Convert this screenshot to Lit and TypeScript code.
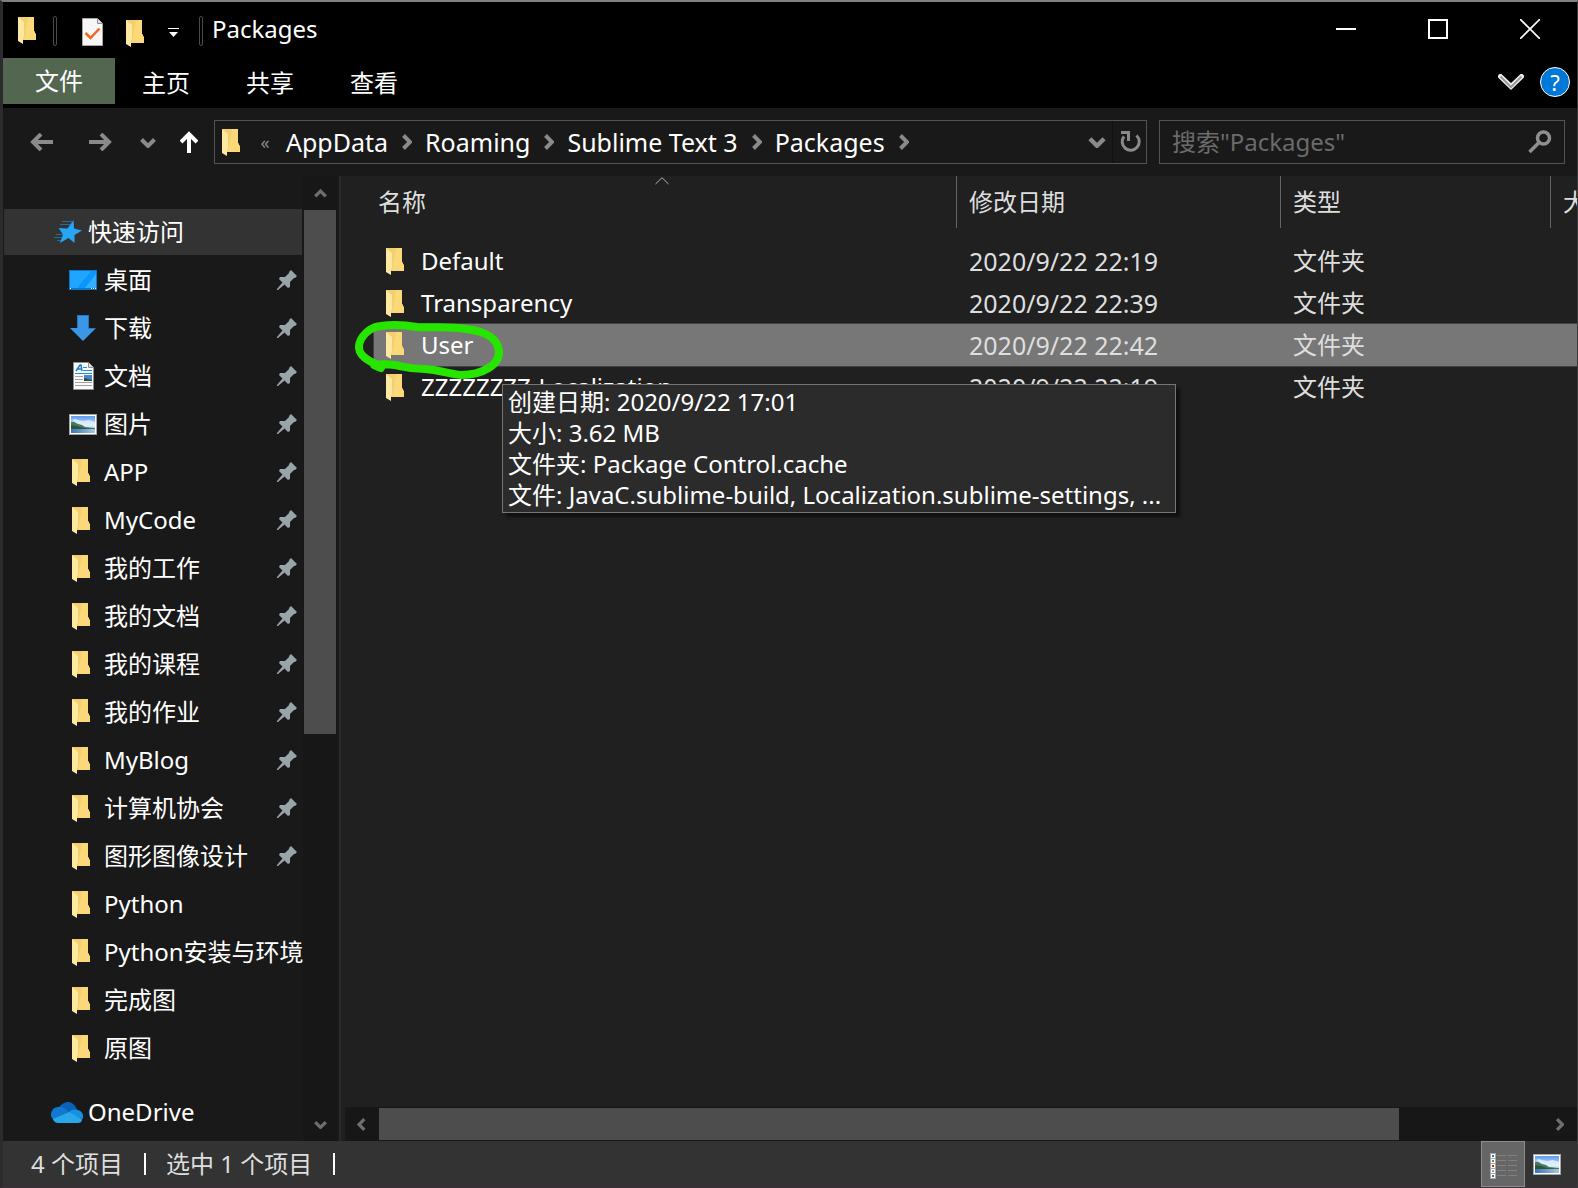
import { LitElement, html, css, svg, nothing } from "lit";
import { customElement } from "lit/decorators.js";

const folder = () => html`<svg class="folder" width="18" height="27" viewBox="0 0 18 27" aria-hidden="true">
  <path d="M0 0H16V14L17 15V16L18 17V23H4L0 20Z" fill="#f3cf70" />
  <path d="M10 0H16V14L17 15V16L18 17V23H6Z" fill="#fddc7c" opacity=".7" />
  <path d="M0 0L6 5V19L5 22V27L0 24Z" fill="#ffe8a0" />
</svg>`;

const pin = () => html`<svg class="pin" width="20" height="20" viewBox="0 0 20 20" aria-hidden="true">
  <path d="M14 0L20 6L18 8H17L13 12V17L11 18L7.500 14.500L1 20L0 20V19L5.500 12.500L2 9L3 7L8 7L12 3V2Z" fill="#98a3aa" />
</svg>`;

const photo = () => html`<svg width="28" height="21" viewBox="0 0 28 21" aria-hidden="true">
  <defs>
    <linearGradient id="sky" x1="0" y1="0" x2="0" y2="1"><stop offset="0" stop-color="#5c9af0" /><stop offset=".6" stop-color="#cfe6fb" /></linearGradient>
    <linearGradient id="sea" x1="0" y1="0" x2="1" y2="0"><stop offset="0" stop-color="#3a72b0" /><stop offset="1" stop-color="#a9c8de" /></linearGradient>
  </defs>
  <rect width="28" height="21" fill="#a5a5a5" />
  <rect x="1" y="1" width="26" height="19" fill="#fff" />
  <rect x="2" y="2" width="24" height="17" fill="url(#sky)" />
  <path d="M3 6L6 5L9 6L14 7L20 6L26 8V12H12Z" fill="#e6f3fd" opacity=".8" />
  <path d="M2 8L5 8L9 10L13 11L16 13L26 14V15H2Z" fill="#4a7a55" />
  <path d="M2 11L8 12L14 14L24 15H2Z" fill="#2b5540" />
  <rect x="2" y="15" width="24" height="4" fill="url(#sea)" />
</svg>`;

const icons: Record<string, () => unknown> = {
  folder,
  photo,
  star: () => html`<svg width="28" height="24" viewBox="0 0 28 24" aria-hidden="true">
    <path d="M19.500 0L20 8.500L28 10.500L20.500 15L20.500 23L14.500 18L6 23L9 14.500L4.500 8L13.500 8.500Z" fill="#27a5f7" />
    <path d="M8 1.500H18M6 4.500H16M2 14.500H9M0 17.500H8M3 20.500H7" stroke="#1787cf" stroke-width="1" opacity=".7" />
  </svg>`,
  desktop: () => html`<svg width="28" height="20" viewBox="0 0 28 20" aria-hidden="true">
    <rect width="28" height="20" fill="#0d78c9" />
    <rect x="1" y="1" width="26" height="17" fill="#34aefd" />
    <path d="M22 1L8 18H16L27 4V1Z" fill="#0a96fa" />
    <path d="M1 1H22L8 18H1Z" fill="#1fa5fd" />
    <path d="M1 18.500H2M22 18.500H23M24 18.500H25M26 18.500H27" stroke="#fff" />
  </svg>`,
  download: () => html`<svg width="26" height="26" viewBox="0 0 26 26" aria-hidden="true">
    <path d="M7 0H19V13H26L13 26L0 13H7Z" fill="#3b97e6" />
    <path d="M7.500 13V.5H18.500V13.500H25" fill="none" stroke="#2277c4" />
  </svg>`,
  doc: () => html`<svg width="21" height="28" viewBox="0 0 21 28" aria-hidden="true">
    <path d="M.5 .5H15.500L20.500 5.500V27.500H.5Z" fill="#fafafa" stroke="#8f8f8f" />
    <path d="M15.500 .5V5.500H20.500" fill="#ddd" stroke="#8f8f8f" />
    <path d="M3 9L7 3H8L9 9M5 7H9" fill="none" stroke="#1a7fc4" stroke-width="1.500" />
    <path d="M10 5.500H14M10 8.500H19M2 11.500H19" stroke="#1d8fd8" />
    <path d="M2 14.500H10M2 17.500H10M2 20.500H19M2 23.500H19" stroke="#a2a2a2" />
    <rect x="11" y="13" width="8" height="6" fill="#4b86c8" />
    <path d="M11 16L15 17L19 18V19H11Z" fill="#294f4c" />
  </svg>`,
  cloud: () => html`<svg width="32" height="21" viewBox="0 0 32 21" aria-hidden="true">
    <path d="M8 6C10 1 15 0 18 0C22 1 25 4 26 8L18 12Z" fill="#0a63b8" />
    <path d="M7 5C11 4 13 6 18 10L3 18C0 16 -1 12 1 9C2 6 5 5 7 5Z" fill="#1178d1" />
    <path d="M18 10C21 7 24 7 27 8C31 9 33 13 32 17L18 12Z" fill="#1690e0" />
    <path d="M2 17L18 10L31 17C31 20 29 21 27 21H7C5 21 3 20 2 17Z" fill="#28a8ea" />
  </svg>`,
};

const chevron = (dir: "up" | "down" | "left" | "right", w: number, cls = "") => {
  const d = {
    up: "M1.500 9L8 2.500L14.500 9",
    down: "M1.500 2.500L8 9L14.500 2.500",
    left: "M9 1.500L2.500 8L9 14.500",
    right: "M2.500 1.500L9 8L2.500 14.500",
  }[dir];
  const tall = dir === "left" || dir === "right";
  const box = tall ? "0 0 11 16" : "0 0 16 11";
  return html`<svg class=${cls} width=${tall ? Math.round((w * 11) / 16) : w} height=${tall ? w : Math.round((w * 11) / 16)}
    viewBox=${box} aria-hidden="true"><path d=${d} fill="none" stroke="currentColor" stroke-width="4" /></svg>`;
};

interface Place { name: string; icon: string; pinned: boolean }
const places: Place[] = [
  { name: "桌面", icon: "desktop", pinned: true },
  { name: "下载", icon: "download", pinned: true },
  { name: "文档", icon: "doc", pinned: true },
  { name: "图片", icon: "photo", pinned: true },
  ...["APP", "MyCode", "我的工作", "我的文档", "我的课程", "我的作业", "MyBlog", "计算机协会", "图形图像设计"]
    .map((name) => ({ name, icon: "folder", pinned: true })),
  ...["Python", "Python安装与环境", "完成图", "原图"].map((name) => ({ name, icon: "folder", pinned: false })),
];

const files = [
  { name: "Default", date: "2020/9/22 22:19" },
  { name: "Transparency", date: "2020/9/22 22:39" },
  { name: "User", date: "2020/9/22 22:42", selected: true },
  { name: "ZZZZZZZZ-Localization", date: "2020/9/22 22:19" },
];

const reset = css`
  * { box-sizing: border-box; }
  button, input { font: inherit; color: inherit; background: none; border: 0; padding: 0; margin: 0; border-radius: 0; }
  a { color: inherit; text-decoration: none; }
  svg { display: block; flex: none; }
`;

@customElement("title-bar")
class TitleBar extends LitElement {
  static styles = [reset, css`
    :host { display: block; background: #000; color: #fff; }
    .bar { display: flex; align-items: center; height: 56px; padding: 0 1px 2px 15px; }
    .sep { width: 4px; height: 30px; margin-top: 4px; border: 1px solid #4a4a4a; border-radius: 2px; }
    .quick { display: flex; align-items: center; }
    .app { margin: 2px 17px 0 0; }
    .check { margin: 6px 23px 0 25px; }
    .new { margin: 8px 24px 0 0; }
    .more { margin: 6px 20px 0 0; }
    .title { margin: 0 auto 0 9px; font-size: 24px; line-height: 32px; font-weight: 400; }
    .win { display: flex; align-items: center; justify-content: center; width: 92px; height: 54px; }
    .tabs { display: flex; align-items: flex-start; height: 50px; }
    .tab { width: 104px; height: 50px; padding-right: 2px; }
    .file { width: 112px; height: 46px; background: #526650; }
    .tools { display: flex; align-items: center; gap: 16px; height: 48px; margin-left: auto; padding-right: 7px; }
    .help { width: 30px; height: 30px; border-radius: 50%; background: #0078d7; border: 1px solid #fff; font-size: 22px; line-height: 28px; }
  `];
  render() {
    return html`<header>
      <div class="bar">
        <div class="app">${folder()}</div><div class="sep"></div>
        <div class="quick">
          <button class="check" aria-label="属性"><svg width="21" height="28" viewBox="0 0 21 28">
            <path d="M.5 .5H15.500L20.500 5.500V27.500H.5Z" fill="#f7f7f7" stroke="#a5a5a5" />
            <path d="M15.500 .5V5.500H20.500" fill="#ddd" stroke="#8f8f8f" />
            <path d="M3.500 15L8.500 20L17.500 10.500" fill="none" stroke="#f7641c" stroke-width="2.500" /></svg></button>
          <button class="new" aria-label="新建文件夹">${folder()}</button>
          <button class="more" aria-label="自定义快速访问工具栏"><svg width="11" height="9" viewBox="0 0 11 9">
            <path d="M0 0H11V1H0ZM1 4H10L5.500 9Z" fill="#fff" /></svg></button>
        </div>
        <div class="sep"></div>
        <h1 class="title">Packages</h1>
        <button class="win" aria-label="最小化"><svg width="20" height="20" viewBox="0 0 20 20"><path d="M0 10H20" stroke="#fff" stroke-width="2" /></svg></button>
        <button class="win" aria-label="最大化"><svg width="20" height="20" viewBox="0 0 20 20"><path d="M1 1H19V19H1Z" fill="none" stroke="#fff" stroke-width="2" /></svg></button>
        <button class="win" aria-label="关闭"><svg width="20" height="20" viewBox="0 0 20 20"><path d="M0 0L20 20M20 0L0 20" stroke="#fff" stroke-width="1.600" /></svg></button>
      </div>
      <nav class="tabs">
        <button class="file">文件</button>
        ${["主页", "共享", "查看"].map((t) => html`<button class="tab">${t}</button>`)}
        <div class="tools">
          <button aria-label="展开功能区"><svg width="26" height="16" viewBox="0 0 26 16">
            <path d="M2.500 2.500L13 12.500L23.500 2.500" fill="none" stroke="#f0f0f0" stroke-width="5" stroke-linecap="round" />
            <path d="M2.500 2.500L13 13L23.500 2.500" fill="none" stroke="#999" stroke-width="2" /></svg></button>
          <button class="help" aria-label="帮助">?</button>
        </div>
      </nav>
    </header>`;
  }
}

@customElement("address-bar")
class AddressBar extends LitElement {
  static styles = [reset, css`
    :host { display: block; background: #191919; color: #fff; }
    .bar { display: flex; align-items: center; height: 68px; padding: 0 12px 0 27px; }
    .nav { display: flex; align-items: center; color: #8a8a8a; }
    .back { margin-right: 36px; }
    .fwd { margin-right: 28px; }
    .hist { margin-right: 24px; }
    .up { margin-right: 16px; color: #fff; }
    .box { display: flex; align-items: center; height: 44px; border: 1px solid #535353; }
    .path { flex: 1; min-width: 0; padding-left: 7px; }
    .trail { display: flex; align-items: center; gap: 13px; margin-left: 17px; color: #8a8a8a; white-space: nowrap; overflow: hidden; font-size: 25px; }
    .crumb { color: #fff; }
    .lead { font-size: 18px; line-height: 24px; width: 16px; text-align: center; }
    .drop { margin-left: auto; margin-right: 6px; color: #8a8a8a; }
    .reload { display: flex; align-items: center; justify-content: center; width: 34px; height: 42px; padding-left: 2px; border-left: 1px solid #121212; color: #8a8a8a; }
    .search { width: 406px; margin-left: 12px; padding: 0 12px; }
    .field { flex: 1; min-width: 0; height: 32px; outline: 0; }
    .field::placeholder { color: #6b6b6b; opacity: 1; }
  `];
  render() {
    return html`<div class="bar">
      <div class="nav">
        <button class="back" aria-label="后退"><svg width="23" height="18" viewBox="0 0 23 18"><path d="M23 9H3M11 1L3 9L11 17" fill="none" stroke="currentColor" stroke-width="4" /></svg></button>
        <button class="fwd" aria-label="前进"><svg width="23" height="18" viewBox="0 0 23 18"><path d="M0 9H20M12 1L20 9L12 17" fill="none" stroke="currentColor" stroke-width="4" /></svg></button>
        <button class="hist" aria-label="最近浏览的位置">${chevron("down", 16)}</button>
        <button class="up" aria-label="上移"><svg width="18" height="22" viewBox="0 0 18 22"><path d="M9 22V3M1 11L9 3L17 11" fill="none" stroke="currentColor" stroke-width="4" /></svg></button>
      </div>
      <div class="box path">
        ${folder()}
        <nav class="trail">
          <span class="lead">«</span>
          ${["AppData", "Roaming", "Sublime Text 3", "Packages"].map((c) => html`<a class="crumb" href="#">${c}</a>${chevron("right", 16)}`)}
        </nav>
        <button class="drop" aria-label="以前的位置">${chevron("down", 18)}</button>
        <button class="reload" aria-label="刷新"><svg width="21" height="22" viewBox="0 0 21 22">
          <path d="M16.500 4.500A8.500 8.500 0 1 1 4 5.500" fill="none" stroke="currentColor" stroke-width="3" />
          <path d="M1 0H10V10H7V3H1Z" fill="currentColor" /></svg></button>
      </div>
      <label class="box search">
        <input class="field" type="search" aria-label="搜索" placeholder='搜索"Packages"' />
        <svg width="24" height="24" viewBox="0 0 24 24" aria-hidden="true"><circle cx="15.500" cy="8" r="6" fill="none" stroke="#8f8f8f" stroke-width="3.500" /><path d="M11.500 12L1.500 22" stroke="#8f8f8f" stroke-width="3.500" /></svg>
      </label>
    </div>`;
  }
}

@customElement("nav-pane")
class NavPane extends LitElement {
  static styles = [reset, css`
    :host { display: flex; min-height: 0; background: #191919; color: #fff; overflow: hidden; }
    .tree { flex: 1; min-width: 0; padding-top: 32px; overflow: hidden; }
    .row { display: flex; align-items: center; height: 48px; padding-right: 6px; }
    .current { height: 46px; margin: 1px; background: #333; padding-left: 50px; }
    .label { flex: none; white-space: nowrap; }
    .item { padding-left: 66px; }
    .icon { display: flex; flex: none; justify-content: center; width: 28px; margin-right: 7px; }
    .kind-folder { justify-content: flex-start; padding-left: 3px; }
    .lead { display: flex; flex: none; width: 32px; margin-right: 2px; }
    .pin { margin-left: auto; }
    .drive { margin-top: 16px; padding-left: 48px; }
    .drive .lead { margin-right: 5px; }
    .scroll { display: flex; flex-direction: column; align-items: center; width: 34px; background: #171717; color: #6e6e6e; margin-right: 2px; }
    .step { display: flex; align-items: center; justify-content: center; width: 34px; height: 34px; }
    .track { display: flex; flex-direction: column; flex: 1; width: 32px; }
    .thumb { height: 58.4%; background: #4d4d4d; }
  `];
  render() {
    return html`<nav class="tree">
        <a class="row current" href="#"><span class="lead">${icons.star()}</span><span class="label">快速访问</span></a>
        ${places.map((p) => html`<a class="row item" href="#">
          <span class="icon kind-${p.icon}">${icons[p.icon]()}</span><span class="label">${p.name}</span>${p.pinned ? pin() : nothing}</a>`)}
        <a class="row drive" href="#"><span class="lead">${icons.cloud()}</span><span class="label">OneDrive</span></a>
      </nav>
      <div class="scroll">
        <button class="step" aria-label="向上滚动">${chevron("up", 13)}</button>
        <div class="track"><div class="thumb"></div></div>
        <button class="step" aria-label="向下滚动">${chevron("down", 13)}</button>
      </div>`;
  }
}

@customElement("file-pane")
class FilePane extends LitElement {
  static styles = [reset, css`
    :host { display: flex; flex-direction: column; min-width: 0; min-height: 0; background: #202020; color: #dedede; border-left: 2px solid #2b2b2b; }
    .view { flex: 1; min-height: 0; overflow: hidden; }
    .list { position: relative; padding-left: 33px; }
    .files { width: 1316px; table-layout: fixed; border-collapse: separate; border-spacing: 0; }
    .c-name { width: 582px; }
    .c-date { width: 324px; }
    .c-type { width: 270px; }
    .c-size { width: 140px; }
    th { padding: 0 0 12px; font-weight: 400; text-align: left; }
    .head { display: block; position: relative; width: 100%; height: 52px; padding-left: 12px; text-align: left; border-left: 1px solid #636363; }
    .first { padding-left: 4px; border-left: 0; }
    .sort { position: absolute; top: 1px; left: 50%; margin-left: -10px; }
    td { height: 42px; padding: 0 0 0 13px; white-space: nowrap; }
    .date { font-size: 25px; }
    .name { padding-left: 12px; color: #fff; }
    .cell { display: flex; align-items: center; gap: 17px; }
    .selected { background: #777; outline: 1px solid #414141; }
    .tip { position: absolute; left: 161px; top: 208px; padding: 1px 14px 2px 5px; border: 1px solid #767676; background: #2b2b2b; color: #fff; line-height: 31px; box-shadow: 4px 4px 3px rgba(0, 0, 0, 0.5); white-space: nowrap; }
    .line { margin: 0; }
    .mark { position: absolute; left: 8px; top: 133px; pointer-events: none; }
    .scroll { display: flex; height: 34px; margin-left: 4px; background: #171717; color: #6e6e6e; }
    .step { display: flex; align-items: center; justify-content: center; width: 34px; height: 34px; padding-right: 2px; }
    .track { flex: 1; padding: 1px 0; }
    .thumb { width: 87.6%; height: 32px; background: #4d4d4d; }
  `];
  render() {
    return html`<div class="view"><div class="list">
        <table class="files">
          <colgroup><col class="c-name" /><col class="c-date" /><col class="c-type" /><col class="c-size" /></colgroup>
          <thead><tr>
            <th aria-sort="ascending"><button class="head first">名称<svg class="sort" width="14" height="8" viewBox="0 0 14 8" aria-hidden="true"><path d="M.5 7L7 .7L13.500 7" fill="none" stroke="#b4b4b4" /></svg></button></th>
            ${["修改日期", "类型", "大小"].map((h) => html`<th><button class="head">${h}</button></th>`)}
          </tr></thead>
          <tbody>${files.map((f) => html`<tr class=${f.selected ? "selected" : ""}>
            <td class="name"><span class="cell">${folder()}<span>${f.name}</span></span></td>
            <td class="date">${f.date}</td><td>文件夹</td><td></td></tr>`)}</tbody>
        </table>
        <div class="tip" role="tooltip">
          <p class="line">创建日期: 2020/9/22 17:01</p>
          <p class="line">大小: 3.62 MB</p>
          <p class="line">文件夹: Package Control.cache</p>
          <p class="line">文件: JavaC.sublime-build, Localization.sublime-settings, ...</p>
        </div>
        <svg class="mark" width="160" height="80" viewBox="0 0 160 80" aria-hidden="true">
          <path d="M30 57C18 51 9 46 10 37C11 28 20 18 32 17C46 15 56 16 68 18C85 19 101 17 117 20C134 22 148 27 150 42C151 56 133 66 112 66C99 65 91 61 76 60C60 60 56 58 46 56C38 55 32 55 25 56L32 59"
            fill="none" stroke="#26e600" stroke-width="8" stroke-linecap="round" stroke-linejoin="round" />
        </svg>
      </div></div>
      <div class="scroll">
        <button class="step" aria-label="向左滚动">${chevron("left", 13)}</button>
        <div class="track"><div class="thumb"></div></div>
        <button class="step" aria-label="向右滚动">${chevron("right", 13)}</button>
      </div>`;
  }
}

@customElement("status-bar")
class StatusBar extends LitElement {
  static styles = [reset, css`
    :host { display: block; background: #333; color: #dedede; }
    .bar { display: flex; align-items: center; height: 46px; padding-left: 28px; }
    .sep { width: 2px; height: 22px; margin: 0 20px 0 21px; background: #fff; }
    .mode { display: flex; align-items: center; justify-content: center; width: 44px; height: 46px; }
    .modes { display: flex; margin-left: auto; padding-right: 8px; }
    .on { background: #666; border: 1px solid #8c8c8c; padding: 4px 0 0 2px; }
  `];
  render() {
    return html`<footer class="bar">
      <span>4 个项目</span><span class="sep"></span><span>选中 1 个项目</span><span class="sep"></span>
      <div class="modes">
        <button class="mode on" aria-label="详细信息"><svg width="28" height="26" viewBox="0 0 28 26">
          ${["#3a6ea5", "#7b8a3a", "#c23b1e", "#8aa39a", "#3a6ea5"].map((c, i) => svg`
            <rect x="0" y=${i * 5} width="6" height="6" fill="#a8a8a8" />
            <rect x="1" y=${i * 5 + 1} width="4" height="4" fill="#fff" />
            <rect x="2" y=${i * 5 + 2} width="2" height="2" fill=${c} />
            <path d="M7 ${i * 5 + 2.5}H16M18 ${i * 5 + 2.5}H27" stroke="#818181" />`)}
        </svg></button>
        <button class="mode" aria-label="大缩略图">${photo()}</button>
      </div>
    </footer>`;
  }
}

@customElement("app-root")
class AppRoot extends LitElement {
  static styles = [reset, css`
    :host { display: block; font-family: "Noto Sans", "Noto Sans CJK SC", sans-serif; font-size: 24px; line-height: 32px; }
    .window { display: grid; grid-template-rows: auto auto minmax(0, 1fr) auto; height: 100vh; border: solid #3a3a3a; border-width: 2px 1px 1px 3px; border-top-color: #808080; border-left-color: #2c2c2e; border-bottom-color: #3a3238; background: #191919; overflow: hidden; }
    .body { display: grid; grid-template-columns: 336px minmax(0, 1fr); min-height: 0; }
  `];
  render() {
    return html`<div class="window">
      <title-bar></title-bar>
      <address-bar></address-bar>
      <main class="body"><nav-pane></nav-pane><file-pane></file-pane></main>
      <status-bar></status-bar>
    </div>`;
  }
}
